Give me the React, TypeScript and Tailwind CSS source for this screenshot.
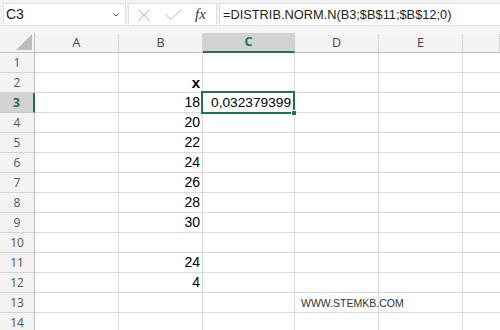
import React from 'react'

const cols = ['A', 'B', 'C', 'D', 'E', '']

type Row = { b?: string; bold?: boolean }

const rows: Row[] = [
  {},
  { b: 'x', bold: true },
  { b: '18' },
  { b: '20' },
  { b: '22' },
  { b: '24' },
  { b: '26' },
  { b: '28' },
  { b: '30' },
  {},
  { b: '24' },
  { b: '4' },
  {},
  {},
]

export default function App() {
  return (
    <div className="w-[500px] h-[330px] overflow-hidden bg-[#f3f3f3] font-['Liberation_Sans',sans-serif] text-[#222]">
      {/* formula bar */}
      <div className="h-[33px] flex items-start pt-[3px] pl-[3px]">
        <div className="w-[123px] h-[23px] bg-white border border-[#e1e1e1] flex items-center justify-between pl-[2px] pr-[6px]">
          <span className="text-[14px] text-[#222]">C3</span>
          <svg width="6" height="4" viewBox="0 0 6 4">
            <path d="M0.5 0.5 L3 3 L5.5 0.5" fill="none" stroke="#444" strokeWidth="1" />
          </svg>
        </div>
        <div className="ml-[2px] w-[89px] h-[23px] bg-white border border-[#e1e1e1] flex items-center">
          <svg className="ml-[9px]" width="12" height="12" viewBox="0 0 12 12">
            <path d="M0.5 0.5 L11.5 11.5 M11.5 0.5 L0.5 11.5" stroke="#b4b4b4" strokeWidth="1" />
          </svg>
          <svg className="ml-[15px]" width="17" height="11" viewBox="0 0 17 11">
            <path d="M0.5 5.5 L6 10.5 L16.5 0.5" fill="none" stroke="#b4b4b4" strokeWidth="1" />
          </svg>
          <span className="ml-[13px] font-['Liberation_Serif',serif] italic text-[15px] text-[#333] leading-none">
            fx
          </span>
        </div>
        <div className="ml-[2px] flex-1 h-[23px] bg-white border border-[#e1e1e1] border-r-0 flex items-center pl-[3px]">
          <span className="text-[12.8px] text-[#222]">=DISTRIB.NORM.N(B3;$B$11;$B$12;0)</span>
        </div>
      </div>

      {/* sheet */}
      <div className="relative grid grid-cols-[35px_84px_84px_92px_84px_84px_1fr] auto-rows-[20px] bg-white">
        {/* header row */}
        <div className="bg-[#f3f3f3] border-r border-b border-[#bfbfbf] relative">
          <svg className="absolute right-[2px] bottom-[2px]" width="16" height="16" viewBox="0 0 16 16">
            <path d="M16 0 L16 16 L0 16 Z" fill="#bcbcbc" />
          </svg>
        </div>
        {cols.map((c, i) => {
          const sel = c === 'C'
          return (
            <div
              key={i}
              className={
                sel
                  ? 'bg-[#d2d2d2] border-r border-[#d2d2d2] border-b-2 border-b-[#217346] flex items-center justify-center text-[12.5px] font-bold text-[#217346] font-["Open_Sans",sans-serif]'
                  : 'bg-[#f3f3f3] border-r border-[#d4d4d4] border-b border-b-[#bfbfbf] flex items-center justify-center text-[12.5px] text-[#444] font-["Open_Sans",sans-serif] mt-[1px]'
              }
            >
              {c}
            </div>
          )
        })}

        {rows.map((r, idx) => {
          const n = idx + 1
          const sel = n === 3
          return (
            <React.Fragment key={n}>
              <div
                className={
                  sel
                    ? 'bg-[#d2d2d2] border-b border-[#c6c6c6] border-r-2 border-r-[#217346] flex items-center justify-center text-[12px] font-bold text-[#217346] font-["Open_Sans",sans-serif]'
                    : 'bg-[#f3f3f3] border-b border-[#d4d4d4] border-r border-r-[#bfbfbf] flex items-center justify-center text-[12px] text-[#555] font-["Open_Sans",sans-serif]'
                }
              >
                {n}
              </div>
              <div className="border-r border-b border-[#dadada]" />
              <div className="border-r border-b border-[#dadada] flex items-end justify-end pr-[2px] pb-[1px] text-[14px] leading-[17px] text-black">
                <span className={r.bold ? 'font-bold text-[15px]' : ''}>{r.b}</span>
              </div>
              <div className="border-r border-b border-[#dadada] flex items-end justify-end pr-[3px] pb-[1px] text-[13.7px] leading-[17px] text-black">
                {sel ? '0,032379399' : ''}
              </div>
              <div className="border-r border-b border-[#dadada] flex items-end pl-[6px] pb-[3px] whitespace-nowrap text-[10.5px] leading-[12px] text-[#333] overflow-visible">
                {n === 13 ? 'WWW.STEMKB.COM' : ''}
              </div>
              <div className="border-r border-b border-[#dadada]" />
              <div className="border-b border-[#dadada]" />
            </React.Fragment>
          )
        })}

        {/* selection box on C3 */}
        <div className="absolute left-[201px] top-[58px] w-[94px] h-[23px] border-2 border-[#217346]">
          <div className="absolute right-[-4px] bottom-[-4px] w-[6px] h-[6px] bg-[#217346] border border-white" />
        </div>
      </div>
    </div>
  )
}
